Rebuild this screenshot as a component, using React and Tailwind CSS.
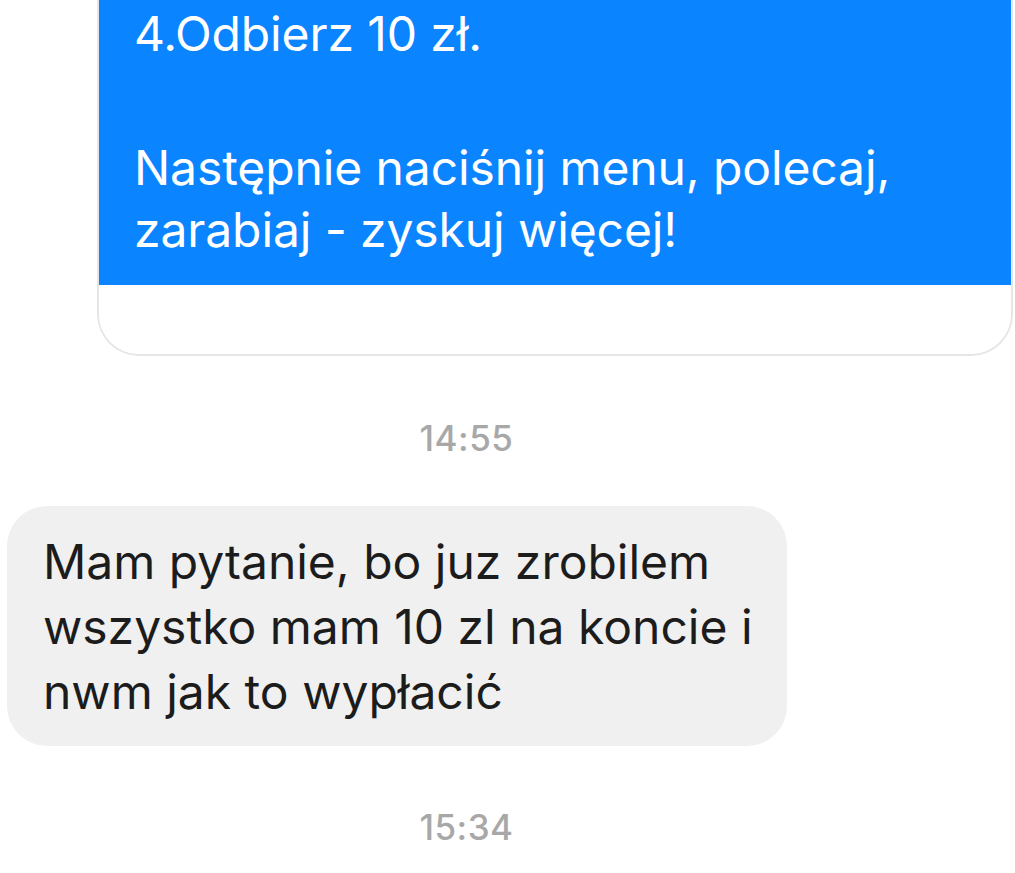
export default function App() {
  const font = { fontFamily: 'Inter, "Noto Sans", sans-serif' };

  return (
    <div className="w-[1015px] h-[873px] bg-white overflow-hidden" style={font}>
      {/* Card from the bot */}
      <div className="ml-[97px] mr-[2px] border-x-2 border-b-2 border-[#e6e6e6] rounded-b-[42px] overflow-hidden">
        <div className="bg-[#0a84ff] text-white text-[48px] leading-[62px] tracking-[-0.1px] pl-[37px] pt-[3px] h-[285px] -mx-[2px]">
          <p>4.Odbierz 10 zł.</p>
          <div className="h-[72px]" />
          <p>Następnie naciśnij menu, polecaj,</p>
          <p>zarabiaj - zyskuj więcej!</p>
        </div>
        <div className="h-[69px] bg-white" />
      </div>

      {/* Timestamp */}
      <div className="pr-[82px] pt-[62px] text-center text-[35px] leading-[40px] font-medium tracking-[0.5px] text-[#a8a8a8]">
        14:55
      </div>

      {/* Incoming message */}
      <div className="pl-[7px] pt-[48px]">
        <div className="w-[780px] h-[240px] rounded-[40px] bg-[#f0f0f0] pl-[36px] pt-[23px] text-[48px] leading-[65px] text-[#1c1c1c]">
          <p>Mam pytanie, bo juz zrobilem</p>
          <p>wszystko mam 10 zl na koncie i</p>
          <p>nwm jak to wypłacić</p>
        </div>
      </div>

      {/* Timestamp */}
      <div className="pr-[82px] pt-[61px] text-center text-[35px] leading-[40px] font-medium tracking-[0.5px] text-[#a8a8a8]">
        15:34
      </div>
    </div>
  );
}
